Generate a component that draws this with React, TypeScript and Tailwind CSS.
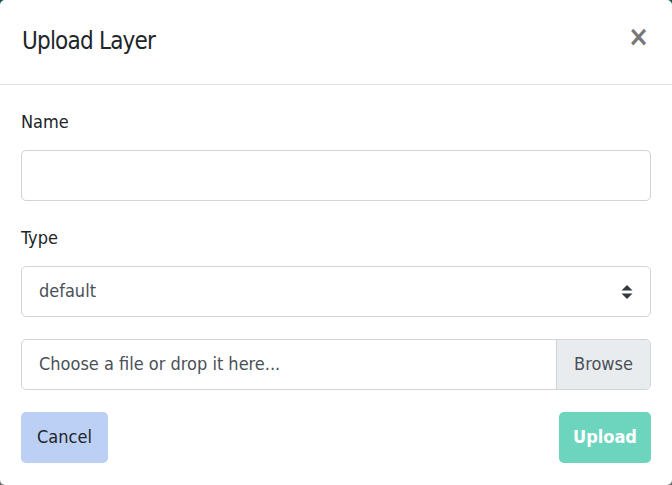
import { useState } from "react";

export default function App() {
  const [name, setName] = useState("");
  const [type, setType] = useState("default");

  return (
    <div
      className="w-[672px] h-[485px] bg-gradient-to-b from-[#0d5a4f] to-[#6b6b6b] font-stretch-condensed"
      style={{ fontFamily: '"DejaVu Sans", sans-serif' }}
    >
      <div className="w-[672px] h-[485px] bg-white rounded-[5px] flex flex-col">
        <div className="h-[85px] border-b border-[#dee2e6] flex items-center justify-between pl-[22px] pr-[23px]">
          <h2 className="text-[24px] text-[#212529] pb-[2px] tracking-[-0.8px]">Upload Layer</h2>
          <button className="text-[#777] text-[28px] font-bold leading-none pb-[10px] pl-[2px]">×</button>
        </div>

        <div className="px-[21px] pt-[23px] flex flex-col">
          <label className="text-[18px] text-[#212529] leading-[28px]">Name</label>
          <input
            value={name}
            onChange={(e) => setName(e.target.value)}
            className="mt-[14px] h-[51px] w-full border border-[#ced4da] rounded-[5px] px-[17px] text-[18px] outline-none"
          />

          <label className="mt-[23px] text-[18px] text-[#212529] leading-[28px]">Type</label>
          <div className="mt-[14px] h-[51px] w-full border border-[#ced4da] rounded-[5px] flex items-center justify-between pl-[17px] pr-[17px]">
            <span className="text-[18px] text-[#495057] pb-[3px]">{type}</span>
            <svg width="12" height="16" viewBox="0 0 12 16" onClick={() => setType("default")}>
              <path d="M6 1 L11.5 6.5 L0.5 6.5 Z" fill="#343a40" />
              <path d="M6 15 L11.5 9.5 L0.5 9.5 Z" fill="#343a40" />
            </svg>
          </div>

          <div className="mt-[22px] h-[51px] w-full border border-[#ced4da] rounded-[5px] flex overflow-hidden">
            <span className="flex-1 flex items-center pl-[17px] pb-[2px] text-[18px] text-[#495057]">
              Choose a file or drop it here...
            </span>
            <span className="w-[94px] bg-[#e9ecef] border-l border-[#ced4da] flex items-center justify-center pb-[2px] text-[18px] text-[#495057]">
              Browse
            </span>
          </div>

          <div className="mt-[22px] flex justify-between">
            <button className="h-[51px] w-[87px] rounded-[5px] bg-[#bcd0f5] pb-[2px] text-[18px] text-[#212529]">
              Cancel
            </button>
            <button className="h-[51px] w-[92px] rounded-[5px] bg-[#6dd5bd] pb-[2px] text-[18px] text-white font-bold">
              Upload
            </button>
          </div>
        </div>
      </div>
    </div>
  );
}
